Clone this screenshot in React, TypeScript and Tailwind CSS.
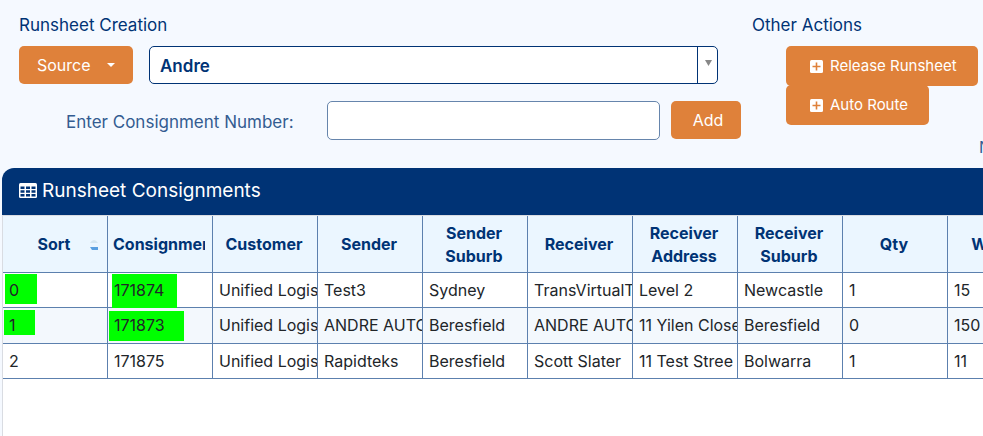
import React from "react";

const columns = [
  "Sort",
  "Consignment",
  "Customer",
  "Sender",
  "Sender Suburb",
  "Receiver",
  "Receiver Address",
  "Receiver Suburb",
  "Qty",
  "Weight",
];

const rows = [
  ["0", "171874", "Unified Logistics", "Test3", "Sydney", "TransVirtualTest", "Level 2", "Newcastle", "1", "15"],
  ["1", "171873", "Unified Logistics", "ANDRE AUTOS", "Beresfield", "ANDRE AUTOS", "11 Yilen Close", "Beresfield", "0", "150"],
  ["2", "171875", "Unified Logistics", "Rapidteks", "Beresfield", "Scott Slater", "11 Test Stree", "Bolwarra", "1", "11"],
];

const highlights: Record<string, string> = {
  "0-0": "left-[2px] top-[1px] h-[30px] w-8",
  "0-1": "left-[4px] top-[1px] h-[34px] w-[65px]",
  "1-0": "left-[1px] top-[2px] h-[25px] w-[31px]",
  "1-1": "left-[1px] top-[3px] h-[30px] w-[75px]",
};

function PlusSquare() {
  return (
    <svg viewBox="0 0 13 13" className="size-[13px] shrink-0" aria-hidden="true">
      <rect width="13" height="13" rx="1.5" fill="#fff" />
      <path d="M6.5 2.5v8M2.5 6.5h8" stroke="#df813a" strokeWidth="1.6" />
    </svg>
  );
}

function TableIcon() {
  return (
    <svg viewBox="0 0 18 17" className="h-[17px] w-[18px] shrink-0" aria-hidden="true">
      <rect width="18" height="15" rx="1.5" fill="#fff" />
      <path
        d="M1.500 3.500h4v2.500h-4zM7 3.500h4v2.500H7zM12.500 3.500h4v2.500h-4zM1.500 7.300h4v2.500h-4zM7 7.300h4v2.500H7zM12.500 7.300h4v2.500h-4zM1.500 11.100h4v2.500h-4zM7 11.100h4v2.500H7zM12.500 11.100h4v2.500h-4z"
        fill="#003375"
      />
    </svg>
  );
}

function ActionButton({ children }: { children: React.ReactNode }) {
  return (
    <button
      type="button"
      className="flex h-10 items-center gap-[7px] rounded-[5px] bg-[#df813a] pr-[21px] pl-6 text-[15px] whitespace-nowrap text-white"
    >
      <PlusSquare />
      {children}
    </button>
  );
}

export default function App() {
  return (
    <div className="min-h-screen overflow-hidden bg-[#f5f9ff] font-['Inter',sans-serif] text-base text-[#003375]">
      <div className="flex h-[168px] pt-3">
        <section className="min-w-0 flex-1 pl-[19px]">
          <h2 className="mb-2 text-[17px] leading-[26px]">Runsheet Creation</h2>
          <div className="flex gap-4 pr-[34px]">
            <button
              type="button"
              className="flex h-[38px] w-[114px] items-center justify-between rounded-[5px] bg-[#df813a] px-[18px] text-white"
            >
              Source
              <svg viewBox="0 0 8 4" className="h-1 w-2" aria-hidden="true">
                <path d="M0 0h8L4 4z" fill="#fff" />
              </svg>
            </button>
            <div className="relative flex-1">
              <select
                aria-label="Driver"
                className="block h-[38px] w-full appearance-none rounded-[5px] border border-[#003375] bg-white px-[10px] pt-[3px] text-[17px] font-semibold"
              >
                <option>Andre</option>
              </select>
              <span className="pointer-events-none absolute inset-y-0 right-0 flex w-[21px] justify-center border-l border-[#003375] pt-[14px]">
                <svg viewBox="0 0 7 6" className="h-[6px] w-[7px]" aria-hidden="true">
                  <path d="M0 0h7L3.500 6z" fill="#888" />
                </svg>
              </span>
            </div>
          </div>
          <div className="mt-[17px] flex items-start gap-[11px] pr-[11px] pl-[47px]">
            <label htmlFor="consignment" className="w-[250px] pt-2 text-[17px] leading-[26px] text-[#335c91]">
              Enter Consignment Number:
            </label>
            <input
              id="consignment"
              type="text"
              className="h-[39px] min-w-0 flex-1 rounded-[5px] border border-[#6685ac] bg-white px-3"
            />
            <button type="button" className="h-[38px] w-[70px] rounded-[5px] bg-[#df813a] pl-1 text-white">
              Add
            </button>
          </div>
        </section>
        <section className="w-[231px] shrink-0">
          <h2 className="mb-2 text-[17px] leading-[26px]">Other Actions</h2>
          <div className="flex flex-col items-start -space-y-px pl-[34px]">
            <ActionButton>Release Runsheet</ActionButton>
            <ActionButton>Auto Route</ActionButton>
          </div>
          <div className="mt-[10px] pl-[227px] text-[#335c91]">N</div>
        </section>
      </div>

      <section className="ml-[2px] min-h-[268px] overflow-hidden rounded-tl-[12px] bg-white">
        <h2 className="flex h-[47px] items-center gap-[5px] bg-[#003375] pb-px pl-[17px] text-[19px] text-white">
          <TableIcon />
          Runsheet Consignments
        </h2>
        <div className="min-h-[221px] border-t border-l border-[#d9dce2]">
          <table className="w-[1050px] table-fixed border-separate border-spacing-0">
            <thead>
              <tr className="h-[57px] bg-[#ebf6ff]">
                {columns.map((name, c) => (
                  <th
                    key={name}
                    className="relative border-r border-b border-[#5c80ae] pt-px pr-[7px] pl-[5px] leading-[23px] font-bold"
                  >
                    <div className="overflow-hidden">{name}</div>
                    {c === 0 && (
                      <svg viewBox="0 0 8 10" className="absolute top-6 right-[9px] h-[10px] w-2" aria-hidden="true">
                        <path d="M0 3Q4-3 8 3z" fill="#d5e6f0" />
                        <path d="M0 7h8v3H2z" fill="#5a9fe0" />
                      </svg>
                    )}
                  </th>
                ))}
              </tr>
            </thead>
            <tbody>
              {rows.map((row, r) => (
                <tr key={row[1]} className="h-[35px] even:h-9 even:bg-[#f3f8fd]">
                  {row.map((value, c) => (
                    <td
                      key={c}
                      className="relative border-r border-b border-[#5c80ae] px-0 pt-[5px] pb-0 align-top text-[#212529]"
                    >
                      {highlights[`${r}-${c}`] && (
                        <span className={`absolute bg-[#00ff00] ${highlights[`${r}-${c}`]}`} />
                      )}
                      <div className="relative overflow-hidden pl-[6px] whitespace-nowrap">{value}</div>
                    </td>
                  ))}
                </tr>
              ))}
            </tbody>
          </table>
        </div>
      </section>
    </div>
  );
}
